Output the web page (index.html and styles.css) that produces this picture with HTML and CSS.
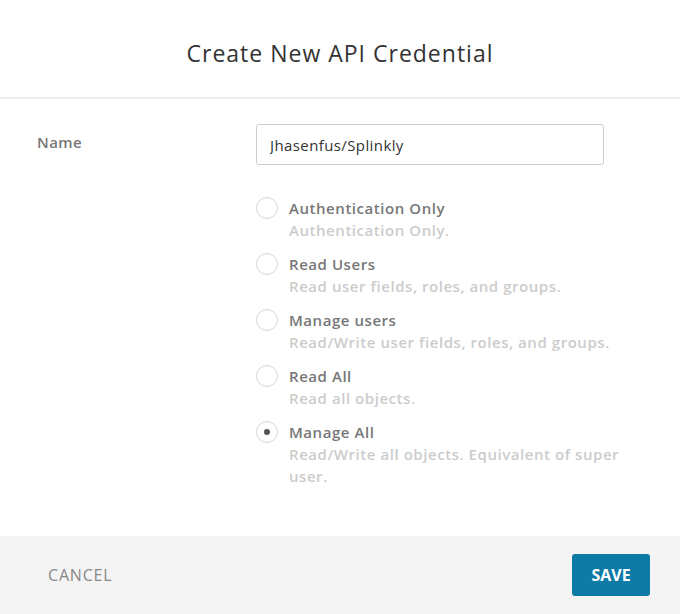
FILE: index.html
```html
<!DOCTYPE html>
<html lang="en">
<head>
  <meta charset="UTF-8" />
  <title>Create New API Credential</title>
  <link rel="stylesheet" href="styles.css">
</head>
<body>
  <div class="modal">
    <div class="modal-header">
      <h1>Create New API Credential</h1>
    </div>

    <div class="modal-body">
      <div class="field-row">
        <label class="field-label" for="nameInput">Name</label>
        <div class="field-control">
          <input type="text" id="nameInput" value="Jhasenfus/Splinkly" />

          <div class="radio-list">
            <div class="radio-item">
              <span class="radio"></span>
              <div class="radio-text">
                <div class="radio-title">Authentication Only</div>
                <div class="radio-desc">Authentication Only.</div>
              </div>
            </div>
            <div class="radio-item">
              <span class="radio"></span>
              <div class="radio-text">
                <div class="radio-title">Read Users</div>
                <div class="radio-desc">Read user fields, roles, and groups.</div>
              </div>
            </div>
            <div class="radio-item">
              <span class="radio"></span>
              <div class="radio-text">
                <div class="radio-title">Manage users</div>
                <div class="radio-desc">Read/Write user fields, roles, and groups.</div>
              </div>
            </div>
            <div class="radio-item">
              <span class="radio"></span>
              <div class="radio-text">
                <div class="radio-title">Read All</div>
                <div class="radio-desc">Read all objects.</div>
              </div>
            </div>
            <div class="radio-item">
              <span class="radio checked"></span>
              <div class="radio-text">
                <div class="radio-title">Manage All</div>
                <div class="radio-desc">Read/Write all objects. Equivalent of super user.</div>
              </div>
            </div>
          </div>
        </div>
      </div>
    </div>

    <div class="modal-footer">
      <button class="btn-cancel">CANCEL</button>
      <button class="btn-save">SAVE</button>
    </div>
  </div>
</body>
</html>
```

FILE: styles.css
```css
body {
  margin: 0;
  font-family: 'Open Sans', sans-serif;
  background: #fff;
}

.modal {
  width: 680px;
  height: 614px;
  display: flex;
  flex-direction: column;
  background: #fff;
}

.modal-header {
  height: 97px;
  border-bottom: 2px solid #eeeeee;
  display: flex;
  align-items: center;
  justify-content: center;
}

h1 {
  margin: 0;
  font-size: 23px;
  font-weight: 400;
  color: #333;
  padding-top: 9px;
  letter-spacing: 1px;
}

.modal-body {
  flex: 1;
  padding: 25px 0 0 37px;
}

.field-row {
  display: flex;
}

.field-label {
  width: 219px;
  padding-top: 8px;
  font-size: 15px;
  font-weight: 600;
  color: #777;
  letter-spacing: 0.4px;
}

.field-control {
  width: 348px;
}

input[type="text"] {
  box-sizing: border-box;
  width: 348px;
  height: 41px;
  border: 1px solid #ccc;
  border-radius: 3px;
  padding: 0 13px;
  font-family: inherit;
  font-size: 15px;
  letter-spacing: 0.4px;
  color: #333;
}

.radio-list {
  margin-top: 32px;
  width: 373px;
}

.radio-item {
  display: flex;
  gap: 11px;
  margin-bottom: 12px;
}

.radio {
  box-sizing: border-box;
  width: 22px;
  height: 22px;
  border: 1px solid #d6d6d6;
  border-radius: 50%;
  flex: none;
  display: flex;
  align-items: center;
  justify-content: center;
}

.radio.checked::after {
  content: "";
  width: 6px;
  height: 6px;
  border-radius: 50%;
  background: #555;
}

.radio-title {
  font-size: 15px;
  font-weight: 600;
  color: #777;
  line-height: 22px;
  letter-spacing: 0.55px;
}

.radio-desc {
  font-size: 15px;
  font-weight: 600;
  color: #ccc;
  line-height: 22px;
  letter-spacing: 0.55px;
}

.modal-footer {
  height: 78px;
  background: #f4f4f4;
  display: flex;
  align-items: center;
  justify-content: space-between;
  padding: 0 30px 0 48px;
}

button {
  font-family: inherit;
  cursor: pointer;
  border: none;
}

.btn-cancel {
  background: none;
  padding: 0;
  font-size: 16px;
  letter-spacing: 0.8px;
  color: #888;
}

.btn-save {
  width: 78px;
  height: 42px;
  border-radius: 3px;
  background: #0e7aa6;
  color: #fff;
  font-size: 16px;
  font-weight: 700;
}
```
